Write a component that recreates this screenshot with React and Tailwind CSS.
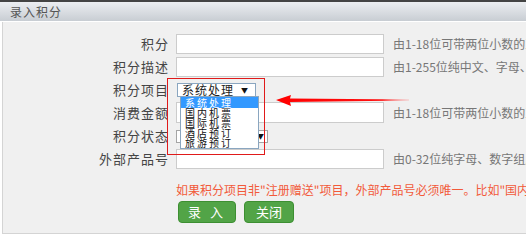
import React from "react";

const font = { fontFamily: '"Noto Sans CJK SC", "Liberation Sans", sans-serif' };

const rows = [
  { label: "积分", kind: "input", h: "h-[20px]", mt: "mt-0", hint: "由1-18位可带两位小数的正数组成" },
  { label: "积分描述", kind: "input", h: "h-[20px]", mt: "mt-[3px]", hint: "由1-255位纯中文、字母、数字组成" },
  { label: "积分项目", kind: "select1", h: "h-[20px]", mt: "mt-[3px]" },
  { label: "消费金额", kind: "input", h: "h-[21px]", mt: "mt-[2px]", hint: "由1-18位可带两位小数的正数组成" },
  { label: "积分状态", kind: "select2", h: "h-[20px]", mt: "mt-[3px]" },
  { label: "外部产品号", kind: "input", h: "h-[20px]", mt: "mt-[3px]", hint: "由0-32位纯字母、数字组成" },
];

const options = ["系统处理", "国内机票", "国际机票", "酒店预订", "旅游预订"];

function Field({ row }) {
  if (row.kind === "input") {
    return (
      <>
        <div className="ml-[7px] w-[208px] h-full bg-white border border-[#cccccc]" />
        <span className="ml-[9px] text-[12px] text-[#777] whitespace-nowrap">{row.hint}</span>
      </>
    );
  }
  if (row.kind === "select1") {
    return (
      <div className="ml-[8px] w-[79px] h-[14px] bg-white border border-[#8aa6c0] flex items-center justify-between pl-[4px] pr-[7px]">
        <span className="text-[12px] leading-[12px] tracking-[1px] text-[#222]">系统处理</span>
        <span className="text-[7px] leading-[7px] text-[#111]">▼</span>
      </div>
    );
  }
  return (
    <div className="ml-[7px] w-[92px] h-[13px] bg-white border border-[#a5a5a5] flex items-center justify-end pr-[3px]">
      <span className="text-[7px] leading-[7px] text-[#111]">▼</span>
    </div>
  );
}

export default function App() {
  return (
    <div className="w-[526px] h-[250px] bg-white flex overflow-hidden relative" style={font}>
      {/* left strip of the page behind */}
      <div className="w-[3px] h-full bg-[#555] flex flex-col">
        <div className="h-[53px]" />
        <div className="h-[19px] bg-[#6a8a2a]" />
      </div>

      <div className="flex-1 flex flex-col">
        {/* dialog header */}
        <div className="h-[21px] border-t-2 border-[#444] bg-gradient-to-b from-[#eceef1] to-[#c8cdd3] flex items-center pl-[10px]">
          <span className="text-[12px] tracking-[1px] text-[#555]">录入积分</span>
        </div>

        <div className="flex pt-[1px] bg-white">
          <div className="w-[2px]" />
          <div className="flex-1 h-[212px] bg-[#f0f0f0] border-l border-b border-[#d4d4d4] pt-[12px] flex flex-col">
            {rows.map((row) => (
              <div key={row.label} className={`flex items-center ${row.h} ${row.mt}`}>
                <div className="w-[166px] text-right text-[13px] tracking-[1px] text-[#444] whitespace-nowrap">
                  {row.label}
                </div>
                <Field row={row} />
              </div>
            ))}

            <div className="mt-[14px] ml-[173px] text-[12px] leading-[14px] text-[#f25a3a] whitespace-nowrap">
              如果积分项目非"注册赠送"项目，外部产品号必须唯一。比如"国内机票"
            </div>

            <div className="mt-[4px] ml-[175px] flex gap-[8px]">
              <button className="w-[58px] h-[22px] bg-[#52a447] border border-[#3d8f32] rounded-[4px] text-white text-[13px] tracking-[3px]">
                录 入
              </button>
              <button className="w-[50px] h-[22px] bg-[#52a447] border border-[#3d8f32] rounded-[4px] text-white text-[13px]">
                关闭
              </button>
            </div>
          </div>
        </div>
      </div>

      {/* open dropdown list */}
      <div className="absolute left-[180px] top-[96px] w-[79px] bg-white border border-[#8aa6c0] flex flex-col">
        {options.map((o, i) => (
          <div
            key={o}
            className={
              i === 0
                ? "h-[11px] bg-[#3399ff] text-white text-[10px] leading-[11px] tracking-[2px] pl-[4px] overflow-hidden"
                : "h-[10px] text-[#111] text-[10px] leading-[10px] tracking-[2px] pl-[4px] overflow-hidden"
            }
          >
            {o}
          </div>
        ))}
      </div>

      {/* annotation: red box */}
      <div className="absolute left-[167px] top-[78px] w-[98px] h-[77px] border border-[#e01a1a]" />

      {/* annotation: red arrow */}
      <svg className="absolute left-[274px] top-[92px]" width="140" height="16" viewBox="0 0 140 16">
        <defs>
          <linearGradient id="fade" x1="0" x2="1" y1="0" y2="0">
            <stop offset="0" stopColor="#ff0000" />
            <stop offset="0.8" stopColor="#ff1010" />
            <stop offset="1" stopColor="#ff6060" stopOpacity="0.3" />
          </linearGradient>
        </defs>
        <polygon points="2,8 17,3 16,6.5 135,7.6 135,8.4 16,10 17,14" fill="url(#fade)" />
      </svg>
    </div>
  );
}
